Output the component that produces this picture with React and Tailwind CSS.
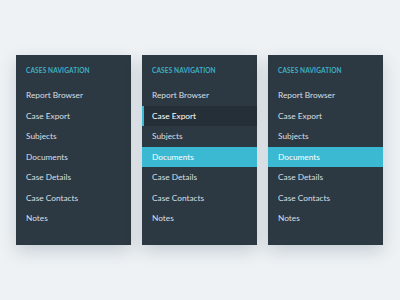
import React from 'react';

const items = ['Report Browser', 'Case Export', 'Subjects', 'Documents', 'Case Details', 'Case Contacts', 'Notes'];

function NavPanel({ hover, active }) {
  return (
    <div className="w-[115px] h-[190px] bg-[#2c3942] shadow-[0_6px_16px_rgba(40,60,80,0.2)] flex flex-col">
      <div className="h-[30px] pl-[10px] pt-[12px] text-[6.5px] font-bold tracking-[0.02em] text-[#3cb0c6] leading-[8px]">
        CASES NAVIGATION
      </div>
      <ul className="flex flex-col">
        {items.map((item) => {
          let cls = 'text-[#d8dfe3]';
          if (item === active) cls = 'bg-[#3cb9d2] text-white';
          else if (item === hover) cls = 'bg-[#242f37] text-white border-l-[2px] border-[#3cb9d2]';
          return (
            <li
              key={item}
              className={`h-[20.5px] flex items-center text-[8.3px] ${item === hover && item !== active ? 'pl-[8px]' : 'pl-[10px]'} ${cls}`}
            >
              {item}
            </li>
          );
        })}
      </ul>
    </div>
  );
}

export default function App() {
  return (
    <div className="w-[400px] h-[300px] bg-[#eef2f5] pt-[55px] pl-[16px] flex gap-[11px]" style={{ fontFamily: 'Lato, "Open Sans", sans-serif' }}>
      <NavPanel />
      <NavPanel hover="Case Export" active="Documents" />
      <NavPanel active="Documents" />
    </div>
  );
}
